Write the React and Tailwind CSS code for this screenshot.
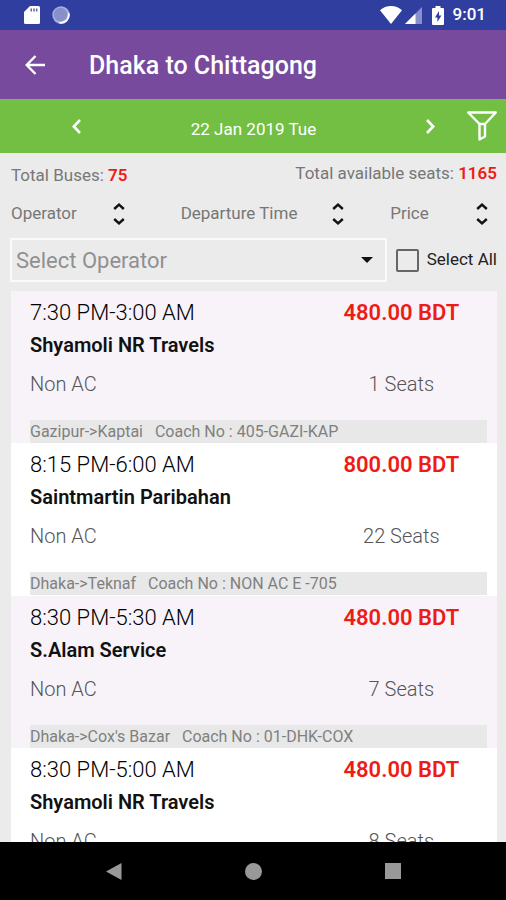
import React, { useState } from 'react';

const buses = [
    { id: 1, time: '7:30 PM-3:00 AM', price: '480.00 BDT', operator: 'Shyamoli NR Travels', type: 'Non AC', seats: 1, route: 'Gazipur->Kaptai', coach: '405-GAZI-KAP' },
    { id: 2, time: '8:15 PM-6:00 AM', price: '800.00 BDT', operator: 'Saintmartin Paribahan', type: 'Non AC', seats: 22, route: 'Dhaka->Teknaf', coach: 'NON AC E -705' },
    { id: 3, time: '8:30 PM-5:30 AM', price: '480.00 BDT', operator: 'S.Alam Service', type: 'Non AC', seats: 7, route: "Dhaka->Cox's Bazar", coach: '01-DHK-COX' },
    { id: 4, time: '8:30 PM-5:00 AM', price: '480.00 BDT', operator: 'Shyamoli NR Travels', type: 'Non AC', seats: 8 },
];

const StatusBar = () => (
    <div className="flex h-[30px] shrink-0 items-center justify-between bg-[#303f9f] pr-5 pl-6 text-white">
        <div className="flex items-center gap-3">
            <svg className="h-[18px] w-4" viewBox="0 0 16 18" fill="currentColor">
                <path d="M6 0h8.500Q16 0 16 1.500v15q0 1.500-1.500 1.500h-13Q0 18 0 16.500V6z" />
                <path d="M6.500 2.500h1.500v3H6.500zM9.200 2.500h1.500v3H9.200zM11.900 2.500h1.500v3h-1.500z" fill="#5c68b5" />
            </svg>
            <svg className="h-[18px] w-[18px]" viewBox="0 0 18 18">
                <circle cx="9" cy="9" r="8.700" fill="#a9b0dc" />
                <circle cx="8.500" cy="8.500" r="6.800" fill="#8790cb" />
                <path d="M16.800 8A8 8 0 0 1 8 16.800" fill="none" stroke="#fff" strokeWidth="1.800" strokeLinecap="round" />
            </svg>
        </div>
        <div className="flex items-center">
            <svg className="h-[18px] w-[22px]" viewBox="0 0 22 18" fill="currentColor">
                <path d="M11 18 0 4.200C3 1.600 7 0 11 0s8 1.600 11 4.200z" />
            </svg>
            <svg className="ml-[3px] h-[17px] w-[17px]" viewBox="0 0 17 17">
                <path d="M0 17 17 0v17z" fill="#8790c9" />
                <path d="M0 17 10.500 6.500V17z" fill="#fff" />
            </svg>
            <svg className="ml-[10px] h-[19px] w-3" viewBox="0 0 12 19">
                <path d="M3.500 0h5v2H11q1 0 1 1v15q0 1-1 1H1q-1 0-1-1V3q0-1 1-1h2.500z" fill="#fff" />
                <path d="M7 5 3 11.500h2.400V16l4-6.500H7z" fill="#303f9f" />
            </svg>
            <span className="ml-[9px] text-[17px] font-medium">9:01</span>
        </div>
    </div>
);

const SortButton = ({ label, className }) => (
    <button type="button" className={`flex items-center justify-between ${className}`}>
        {label}
        <svg className="h-[22px] w-3" viewBox="0 0 12 22" fill="none" stroke="#111" strokeWidth="2.400">
            <path d="M1.200 6 6 1.700 10.800 6M1.200 16 6 20.300 10.800 16" />
        </svg>
    </button>
);

const BusCard = ({ bus }) => (
    <li className="bg-white pr-[10px] pl-[19px] odd:bg-[#f7f3f9] even:pb-px">
        <div className="grid grid-cols-[5fr_3fr] pt-1.5">
            <div>
                <p className="text-[22px] leading-8 font-light text-black">{bus.time}</p>
                <h2 className="text-xl leading-8 font-semibold text-[#111]">{bus.operator}</h2>
                <p className="mt-[5px] text-xl leading-9 font-light text-[#555]">{bus.type}</p>
            </div>
            <div className="flex flex-col justify-between text-center">
                <p className="text-[22px] leading-8 font-semibold text-[#ee1c16]">{bus.price}</p>
                <p className="text-xl leading-9 font-light text-[#555]">{bus.seats} Seats</p>
            </div>
        </div>
        {bus.route && (
            <p className="mt-[18px] h-[23px] bg-[#e8e8e8] text-base leading-6 whitespace-pre text-[#808080]">
                {bus.route}{'   '}Coach No : {bus.coach}
            </p>
        )}
    </li>
);

const App = () => {
    const [selectAll, setSelectAll] = useState(false);

    return (
        <div className="flex h-screen flex-col bg-[#ebebeb] font-[Roboto,sans-serif]">
            <StatusBar />

            <header className="flex h-[69px] shrink-0 items-center bg-[#774a9e] pl-[25px] text-white">
                <button type="button" aria-label="Back">
                    <svg className="h-5 w-5" viewBox="0 0 20 20" fill="none" stroke="currentColor" strokeWidth="2.400">
                        <path d="M20 10H2M10.500 1 1.700 10l8.800 9" />
                    </svg>
                </button>
                <h1 className="ml-11 pt-0.5 text-[25px] font-medium">Dhaka to Chittagong</h1>
            </header>

            {/* Date switcher */}
            <div className="flex h-[54px] shrink-0 items-center bg-[#72bf44] pr-[9px] pl-[72px] text-white">
                <button type="button" aria-label="Previous day">
                    <svg className="h-[15px] w-[9px]" viewBox="0 0 9 15" fill="none" stroke="currentColor" strokeWidth="2.600">
                        <path d="M8 1 1.800 7.500 8 14" />
                    </svg>
                </button>
                <span className="flex-1 pt-2 text-center text-[17px]">22 Jan 2019 Tue</span>
                <button type="button" aria-label="Next day">
                    <svg className="h-[15px] w-[9px]" viewBox="0 0 9 15" fill="none" stroke="currentColor" strokeWidth="2.600">
                        <path d="M1 1l6.200 6.500L1 14" />
                    </svg>
                </button>
                <button type="button" aria-label="Filter" className="ml-8">
                    <svg className="h-[30px] w-[30px]" viewBox="0 0 30 30" fill="none" stroke="currentColor" strokeWidth="2.400" strokeLinejoin="round">
                        <path d="M1.200 1.500h27.600L18 13v12.500l-5.500 3V13zM12.500 13H18" />
                    </svg>
                </button>
            </div>

            {/* Totals */}
            <div className="flex shrink-0 justify-between pt-1 pr-[9px] pb-1 pl-[11px] text-[17px] leading-8 text-[#777]">
                <p className="pt-0.5">Total Buses: <strong className="font-semibold text-[#ee1c16]">75</strong></p>
                <p>Total available seats: <strong className="font-semibold text-[#ee1c16]">1165</strong></p>
            </div>

            <div className="grid h-[38px] shrink-0 grid-cols-[170fr_210fr_107fr] pr-[9px] pl-[11px] text-[17px] text-[#777]">
                <SortButton label="Operator" className="pr-14" />
                <SortButton label="Departure Time" className="pr-[46px]" />
                <SortButton label="Price" className="pr-[9px]" />
            </div>

            <div className="flex h-[58px] shrink-0 items-center gap-[9px] pr-[9px] pb-1 pl-[10px]">
                <div className="relative flex-1">
                    <select aria-label="Select Operator" className="h-11 w-full appearance-none border-2 border-[#fafafa] bg-transparent pl-1 text-[22px] text-[#909090]">
                        <option>Select Operator</option>
                    </select>
                    <svg className="pointer-events-none absolute top-[19px] right-[14px] h-[6px] w-3" viewBox="0 0 12 6" fill="#111">
                        <path d="M0 0h12L6 6z" />
                    </svg>
                </div>
                <label className="flex items-center gap-2 text-[17px] text-[#222]">
                    <input
                        type="checkbox"
                        checked={selectAll}
                        onChange={(e) => setSelectAll(e.target.checked)}
                        className="h-[23px] w-[23px] appearance-none rounded-xs border-2 border-[#666] checked:bg-[#774a9e]"
                    />
                    Select All
                </label>
            </div>

            <ul className="min-h-0 flex-1 overflow-y-auto bg-[#ebebeb] pr-[9px] pl-[11px] [scrollbar-width:none]">
                {buses.map((bus) => (
                    <BusCard key={bus.id} bus={bus} />
                ))}
            </ul>

            <nav className="flex h-[58px] shrink-0 items-center justify-center gap-[123px] bg-black text-[#999]">
                <button type="button" aria-label="Back">
                    <svg className="h-[17px] w-4" viewBox="0 0 16 17" fill="currentColor">
                        <path d="M15.500 0v17L0 8.500z" />
                    </svg>
                </button>
                <button type="button" aria-label="Home" className="h-[17px] w-[17px] rounded-full bg-[#999]" />
                <button type="button" aria-label="Recent apps" className="h-4 w-4 bg-[#999]" />
            </nav>
        </div>
    );
};

export default App;
